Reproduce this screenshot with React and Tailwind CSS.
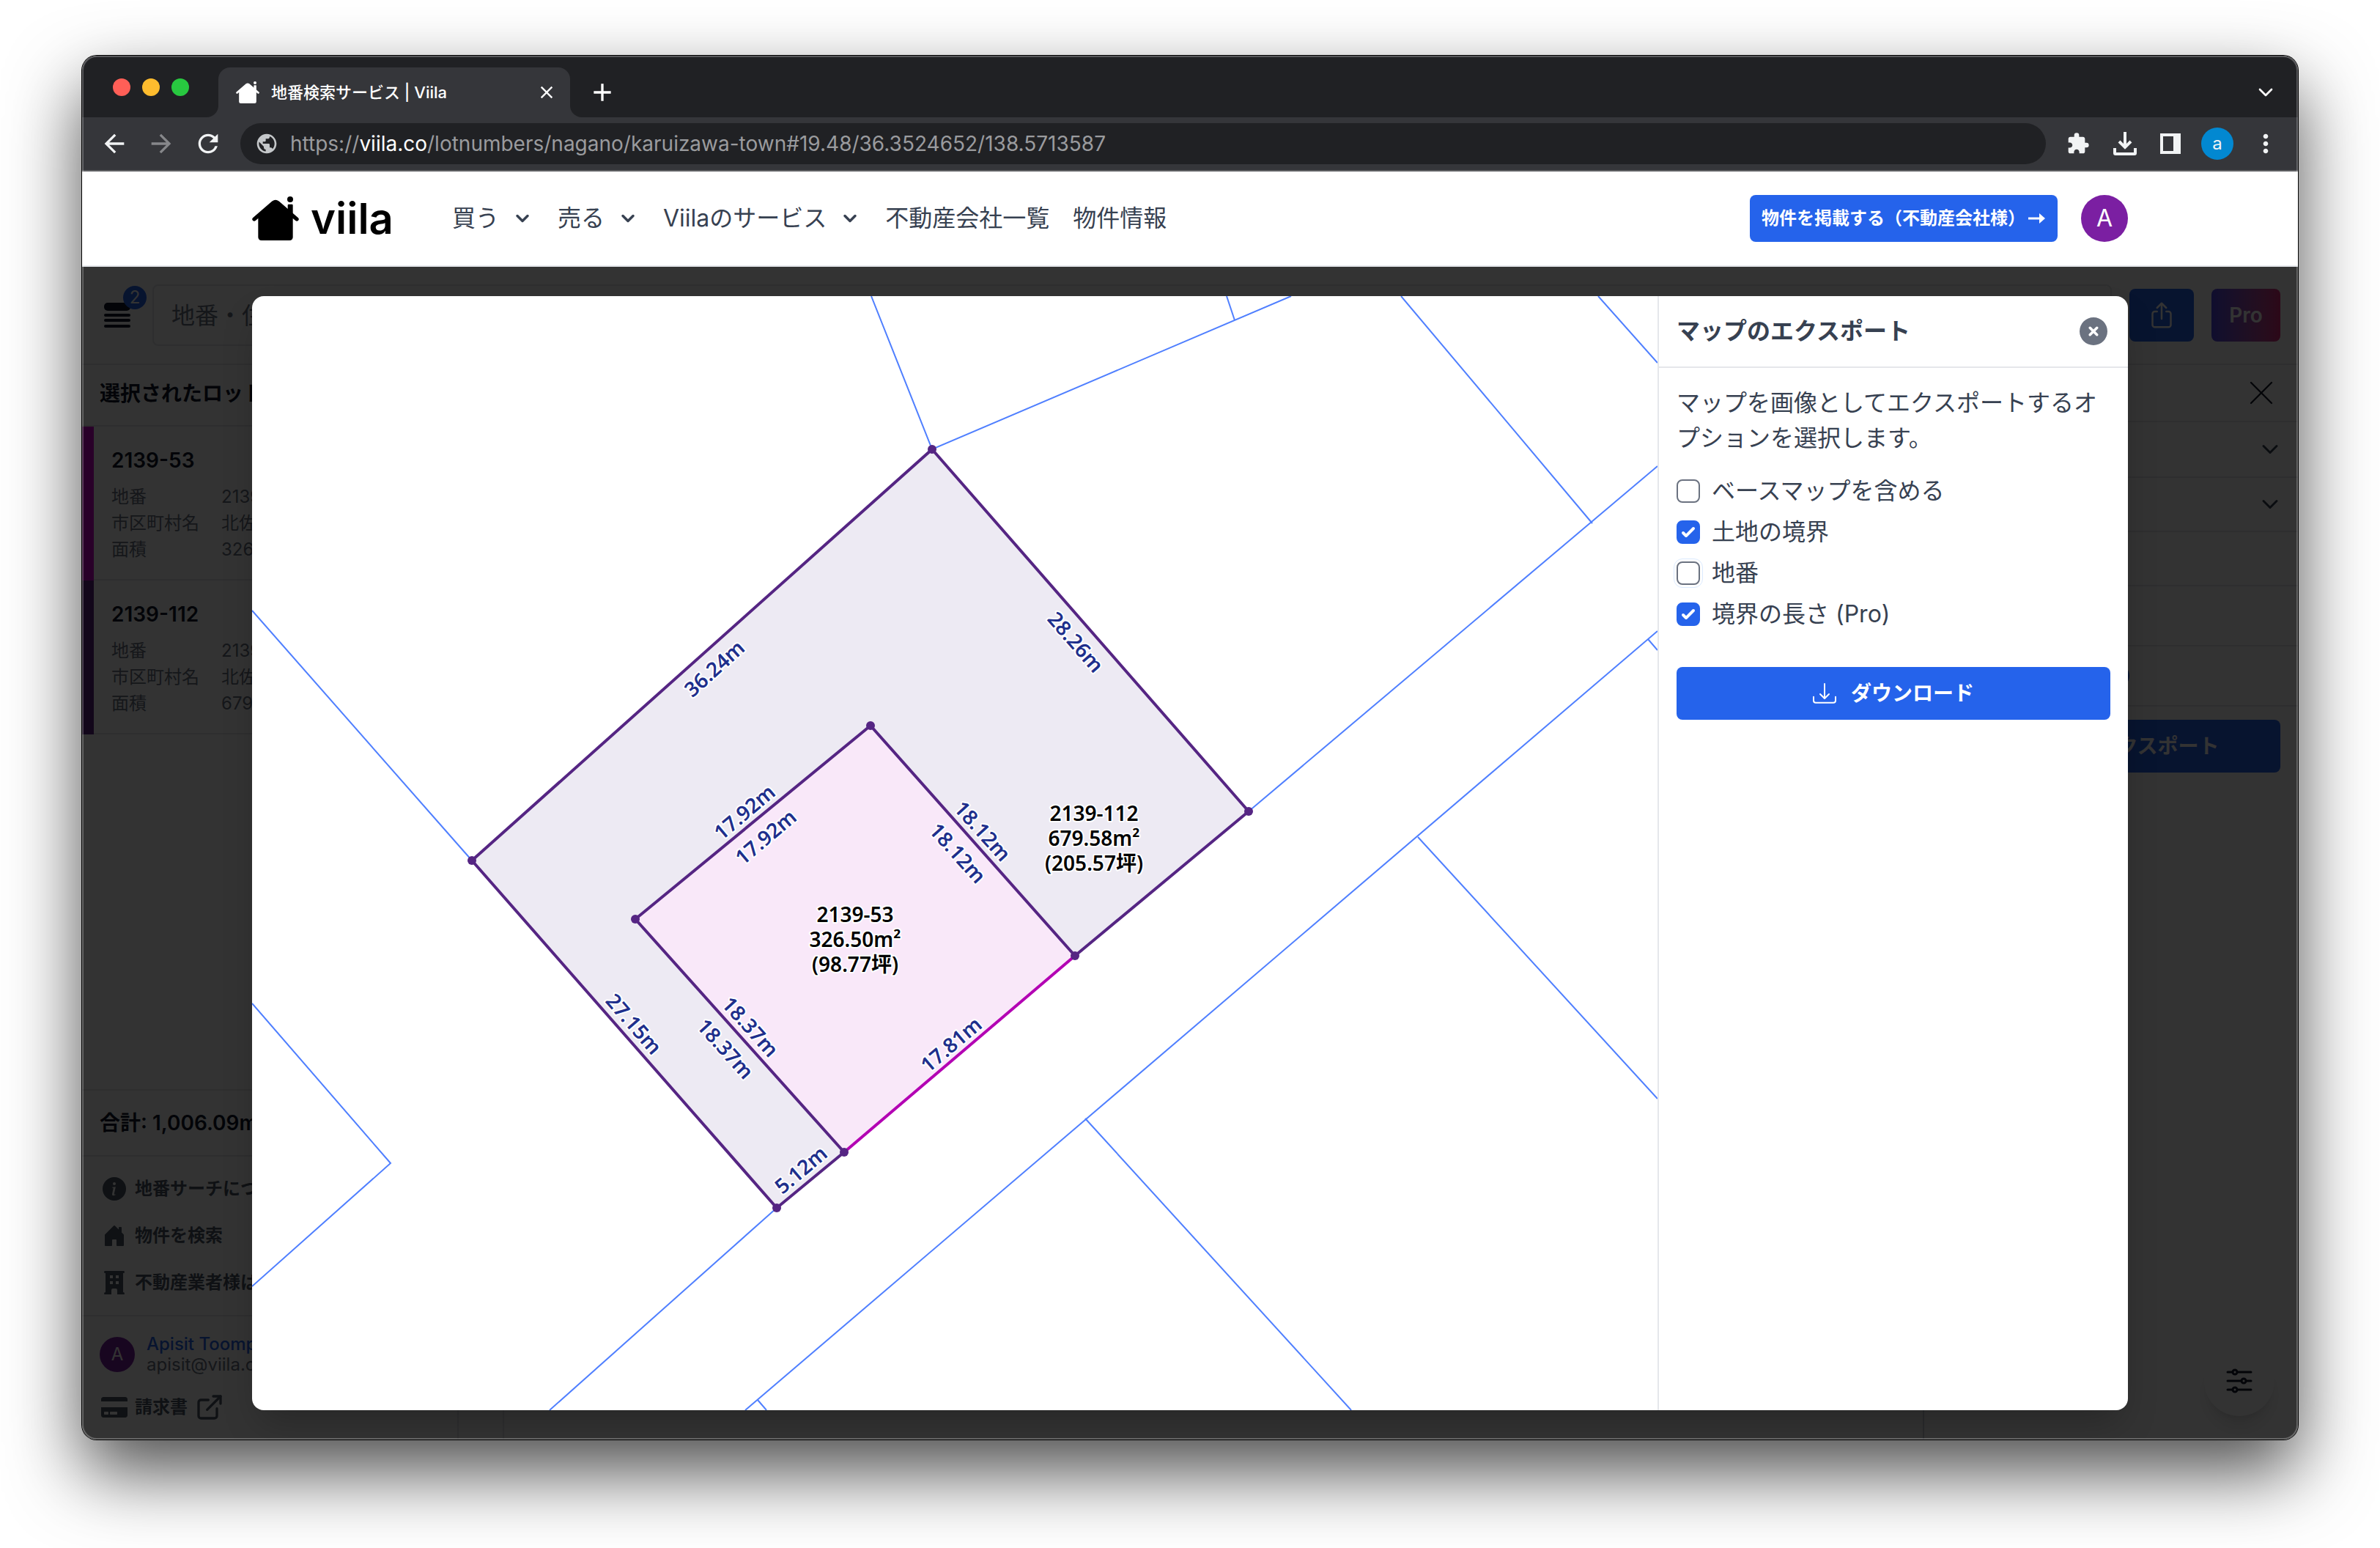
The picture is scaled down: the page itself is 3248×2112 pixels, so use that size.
import React, { useState } from 'react';
import { ChevronDown, ExternalLink, X } from 'lucide-react';
import { BsDownload, BsHouseDoorFill, BsInfoCircleFill } from 'react-icons/bs';
import { FaCreditCard } from 'react-icons/fa';
import { FaCircleXmark } from 'react-icons/fa6';
import { IoShareOutline } from 'react-icons/io5';
import {
  MdAdd,
  MdArrowBack,
  MdArrowForward,
  MdClose,
  MdExtension,
  MdMoreVert,
  MdPublic,
  MdRefresh,
} from 'react-icons/md';

const lots = [
  { id: '2139-53', name: '北佐久郡軽井沢町', area: '326.50m²', bar: 'bg-[#cc00cc]' },
  { id: '2139-112', name: '北佐久郡軽井沢町', area: '679.58m²', bar: 'bg-[#5b2182]' },
];

const navItems = [
  { label: '買う', menu: true },
  { label: '売る', menu: true },
  { label: 'Viilaのサービス', menu: true },
  { label: '不動産会社一覧' },
  { label: '物件情報' },
];

// Boundary lines around the selected lots
const boundaries = [
  'M1189 404 L1272 613 L1762 404',
  'M1674 404 L1685 437',
  'M1912 404 L2173 714',
  'M2181 404 L2262 495',
  'M1704 1107 L2262 636',
  'M2262 861 L1017 1924',
  'M2249 872 L2262 887',
  'M1034 1910 L1046 1924',
  'M1935 1142 L2262 1499',
  'M1481 1526 L1844 1924',
  'M1060 1648 L750 1924',
  'M644 1174 L344 833',
  'M344 1369 L533 1587 L344 1755',
];

const corners = [
  [1272, 613],
  [1704, 1107],
  [1467, 1304],
  [644, 1174],
  [1188, 990],
  [867, 1254],
  [1152, 1572],
  [1060, 1648],
];

const lengths = [
  { text: '36.24m', x: 975, y: 912, angle: -42 },
  { text: '28.26m', x: 1468, y: 876, angle: 49 },
  { text: '17.92m', x: 1016, y: 1108, angle: -40 },
  { text: '17.92m', x: 1045, y: 1142, angle: -40 },
  { text: '18.12m', x: 1341, y: 1134, angle: 48 },
  { text: '18.12m', x: 1307, y: 1164, angle: 48 },
  { text: '18.37m', x: 1024, y: 1401, angle: 48 },
  { text: '18.37m', x: 990, y: 1431, angle: 48 },
  { text: '27.15m', x: 865, y: 1397, angle: 49 },
  { text: '17.81m', x: 1298, y: 1425, angle: -40 },
  { text: '5.12m', x: 1093, y: 1596, angle: -40 },
];

const areas = [
  { lines: ['2139-112', '679.58m²', '(205.57坪)'], x: 1493, y: 1110 },
  { lines: ['2139-53', '326.50m²', '(98.77坪)'], x: 1167, y: 1248 },
];

const HouseLogo = ({ className }) => (
  <svg viewBox="42 54 190 180" className={className} fill="currentColor" aria-hidden="true">
    <circle cx="197" cy="66" r="12" />
    <rect x="187" y="86" width="21" height="60" rx="4" />
    <path d="M50 147 L128 80 Q137 73 146 80 L224 147" fill="none" stroke="currentColor" strokeWidth="16" strokeLinecap="round" />
    <path d="M66 133 L130 80 Q137 75 144 80 L208 133 V220 Q208 234 194 234 H80 Q66 234 66 220 Z" />
  </svg>
);

const TrayIcon = () => (
  <svg viewBox="0 0 32 32" className="size-8" fill="none" stroke="currentColor" strokeWidth="4" aria-hidden="true">
    <path d="M16 0 V21 M8 13 L16 21 L24 13 M2 22 V29 Q2 30 3 30 H29 Q30 30 30 29 V22" />
  </svg>
);

const SidePanelIcon = () => (
  <svg viewBox="0 0 28 28" className="size-7" fill="currentColor" aria-hidden="true">
    <path fillRule="evenodd" d="M0 0 H28 V28 H0 Z M4 4 V24 H18 V4 Z" />
  </svg>
);

const ListIcon = () => (
  <svg viewBox="0 0 36 34" className="h-[34px] w-9" fill="currentColor" aria-hidden="true">
    <rect width="36" height="11" rx="5" />
    <rect y="15" width="36" height="4" rx="2" />
    <rect y="22" width="36" height="4" rx="2" />
    <rect y="30" width="36" height="4" rx="2" />
  </svg>
);

const BuildingIcon = () => (
  <svg viewBox="0 0 32 32" className="size-8" fill="currentColor" aria-hidden="true">
    <path
      fillRule="evenodd"
      d="M3 0 H29 Q30 0 30 2 Q30 3 28 3 V29 Q30 29 30 31 Q30 32 29 32 H20 V26 Q20 24 18 24 H14 Q12 24 12 26 V32 H3 Q2 32 2 31 Q2 29 4 29 V3 Q2 3 2 2 Q2 0 3 0 Z M10 6 V10 H14 V6 Z M18 6 V10 H22 V6 Z M10 14 V18 H14 V14 Z M18 14 V18 H22 V14 Z"
    />
  </svg>
);

const SlidersIcon = () => (
  <svg viewBox="0 0 36 34" className="h-[34px] w-9" fill="none" stroke="currentColor" strokeWidth="3" strokeLinecap="round" aria-hidden="true">
    <path d="M2 5 H8 M16 5 H34 M2 17 H20 M28 17 H34 M2 29 H8 M16 29 H34" />
    <circle cx="12" cy="5" r="3" />
    <circle cx="24" cy="17" r="3" />
    <circle cx="12" cy="29" r="3" />
  </svg>
);

const Browser = () => (
  <>
    {/* Tab strip */}
    <div className="flex h-[84px] items-end bg-[#202124] pr-7 pl-[42px] text-white">
      <div className="flex h-full items-center gap-4 pt-0.5">
        <button aria-label="Close window" className="size-6 rounded-full bg-[#ff5f57]" />
        <button aria-label="Minimize window" className="size-6 rounded-full bg-[#febc2e]" />
        <button aria-label="Zoom window" className="size-6 rounded-full bg-[#28c840]" />
      </div>
      <div className="ml-6 size-4 overflow-hidden bg-[#35363a]">
        <div className="size-4 rounded-br-2xl bg-[#202124]" />
      </div>
      <div className="flex h-[68px] w-[480px] items-center rounded-t-2xl bg-[#35363a] pr-[18px] pl-6">
        <HouseLogo className="h-[30px] w-8" />
        <span className="ml-4 flex-1 text-[22px] leading-8 font-medium whitespace-nowrap">地番検索サービス | Viila</span>
        <button aria-label="Close tab"><MdClose className="size-7" /></button>
      </div>
      <div className="size-4 bg-[#35363a]">
        <div className="size-4 rounded-bl-2xl bg-[#202124]" />
      </div>
      <div className="flex h-[68px] flex-1 items-center justify-between pl-2">
        <button aria-label="New tab"><MdAdd className="size-10" /></button>
        <button aria-label="Search tabs"><ChevronDown className="size-8" strokeWidth={2} /></button>
      </div>
    </div>

    {/* Toolbar */}
    <div className="flex h-[74px] items-center border-b-2 border-[#5f6063] bg-[#35363a] pr-6 pl-6 text-[#f1f3f4]">
      <button aria-label="Back"><MdArrowBack className="size-10" /></button>
      <button aria-label="Forward" className="ml-6 text-[#86878a]"><MdArrowForward className="size-10" /></button>
      <button aria-label="Reload" className="ml-6"><MdRefresh className="size-10" /></button>
      <div role="textbox" aria-label="Address" className="ml-6 flex h-14 flex-1 items-center gap-4 rounded-full bg-[#202124] pl-5 text-[28px] leading-8 text-[#9a9b9e]">
        <MdPublic className="size-8 text-[#c4c7c9]" />
        <span>
          https://<span className="text-white">viila.co</span>/lotnumbers/nagano/karuizawa-town#19.48/36.3524652/138.5713587
        </span>
      </div>
      <div className="ml-7 flex items-center gap-8">
        <button aria-label="Extensions"><MdExtension className="size-8" /></button>
        <button aria-label="Downloads"><TrayIcon /></button>
        <button aria-label="Side panel"><SidePanelIcon /></button>
        <button aria-label="Profile" className="-ml-1 size-11 rounded-full bg-[#0288d1] text-2xl leading-8">a</button>
        <button aria-label="More" className="-ml-2"><MdMoreVert className="size-10" /></button>
      </div>
    </div>
  </>
);

const SiteHeader = () => (
  <header className="border-b-2 border-gray-200 bg-white">
    <div className="mx-auto flex h-32 max-w-[2560px] items-center">
      <a href="#" className="flex items-center gap-4 text-black">
        <HouseLogo className="h-[60px] w-16" />
        <span className="text-[58px] leading-[60px] font-semibold">viila</span>
      </a>
      <nav className="ml-16 flex flex-1 items-center text-[32px] leading-[48px] text-[#374151]">
        {navItems.map((item) => (
          <a key={item.label} href="#" className="flex items-center gap-4 px-4 whitespace-nowrap">
            {item.label}
            {item.menu && <ChevronDown className="mx-0.5 size-7" strokeWidth={3} />}
          </a>
        ))}
      </nav>
      <button className="flex h-16 items-center rounded-lg bg-[#2563eb] px-4 text-2xl font-bold whitespace-nowrap text-white">
        物件を掲載する（不動産会社様）
        <svg viewBox="0 0 24 24" className="ml-1 h-6 w-6" fill="none" stroke="currentColor" strokeWidth="3" aria-hidden="true">
          <path d="M0 12 H16" />
          <path d="M15 5 L23 12 L15 19 Z" fill="currentColor" stroke="none" />
        </svg>
      </button>
      <button aria-label="Account" className="ml-8 size-16 rounded-full bg-[#7b1fa2] text-[32px] text-white">A</button>
    </div>
  </header>
);

const SearchBar = () => (
  <div className="flex h-[134px] items-center gap-6 border-b-2 border-gray-200 px-6">
    <button aria-label="選択リスト" className="relative flex size-12 items-center justify-center text-gray-900">
      <ListIcon />
      <span className="absolute -top-4 -right-4 flex size-8 items-center justify-center rounded-full bg-[#2563eb] text-2xl text-white">2</span>
    </button>
    <input
      type="text"
      aria-label="地番・住所"
      placeholder="地番・住所で検索"
      className="h-[84px] min-w-0 flex-1 rounded-lg border-2 border-gray-200 bg-transparent px-6 text-[32px] placeholder:text-gray-500"
    />
    <button aria-label="共有" className="flex h-[72px] w-[88px] items-center justify-center rounded-lg bg-[#2563eb] text-white">
      <IoShareOutline className="size-10" />
    </button>
    <button className="h-[72px] w-[94px] rounded-lg bg-linear-to-r from-[#4f46e5] to-[#db2777] text-[28px] font-semibold text-white">Pro</button>
  </div>
);

const Sidebar = () => (
  <aside className="flex w-[514px] flex-col border-r-2 border-gray-200">
    <h2 className="flex h-[84px] items-center border-b-2 border-gray-200 px-6 pb-1 text-[28px] font-bold text-gray-900">選択されたロット</h2>
    {lots.map((lot) => (
      <div key={lot.id} className="flex">
        <div className={`w-4 ${lot.bar}`} />
        <div className="flex flex-1 flex-col gap-3 border-b-2 border-gray-200 px-6 pt-[26px] pb-[22px]">
          <h3 className="text-[28px] leading-10 font-semibold text-gray-900">{lot.id}</h3>
          <dl className="grid grid-cols-[150px_1fr] text-2xl leading-9 whitespace-nowrap text-gray-500">
            <dt>地番</dt>
            <dd>{lot.id}</dd>
            <dt>市区町村名</dt>
            <dd>{lot.name}</dd>
            <dt>面積</dt>
            <dd>{lot.area}</dd>
          </dl>
        </div>
      </div>
    ))}
    <p className="mt-auto flex h-[92px] items-center border-y-2 border-gray-200 px-6 text-[28px] font-semibold text-gray-900">合計: 1,006.09m²</p>
    <nav className="border-b-2 border-gray-200 px-7 py-3 text-2xl font-semibold text-gray-600">
      <a href="#" className="flex h-16 items-center gap-3"><BsInfoCircleFill className="size-8" />地番サーチについて</a>
      <a href="#" className="flex h-16 items-center gap-3"><BsHouseDoorFill className="size-8" />物件を検索</a>
      <a href="#" className="flex h-16 items-center gap-3"><BuildingIcon />不動産業者様はこちら</a>
    </nav>
    <div className="flex items-center gap-4 px-6 pt-6 text-2xl leading-7">
      <span className="flex size-12 items-center justify-center rounded-full bg-[#7b1fa2] text-white">A</span>
      <div>
        <p className="font-medium text-[#2563eb]">Apisit Toompakdee</p>
        <p className="text-gray-500">apisit@viila.co</p>
      </div>
    </div>
    <a href="#" className="mt-3 mb-3 flex h-16 items-center gap-[10px] px-[26px] text-2xl font-semibold text-gray-600">
      <FaCreditCard className="size-9" />
      請求書
      <ExternalLink className="size-10" strokeWidth={2} />
    </a>
  </aside>
);

const DetailPanel = () => (
  <aside className="flex w-[512px] flex-col border-l-2 border-gray-300">
    <div className="flex h-[78px] items-center justify-end border-b-2 border-gray-200 pr-[22px]">
      <button aria-label="閉じる" className="text-gray-900"><X className="size-14" strokeWidth={1} /></button>
    </div>
    <button aria-label="詳細を開く" className="flex h-[76px] items-center justify-end border-b-2 border-gray-200 pr-5 text-gray-700">
      <ChevronDown className="size-9" />
    </button>
    <button aria-label="設定を開く" className="flex h-[74px] items-center justify-end border-b-2 border-gray-200 pr-5 text-gray-700">
      <ChevronDown className="size-9" />
    </button>
    <div className="h-[74px] border-b-2 border-gray-200" />
    <div className="h-[82px] border-b-2 border-gray-200" />
    <div className="flex h-[82px] items-center border-b-2 border-gray-200 pl-[216px]">
      <span className="h-8 w-16 rounded-full bg-[#2563eb]" />
    </div>
    <button className="mx-6 mt-[18px] flex h-[72px] items-center justify-center rounded-lg bg-[#2563eb] pl-4 text-[28px] font-semibold text-white">
      マップのエクスポート
    </button>
  </aside>
);

const LotMap = () => (
  <svg viewBox="344 404 1918 1520" preserveAspectRatio="xMidYMid slice" className="h-full w-full" role="img" aria-label="土地の境界">
    <g fill="none" stroke="#4f7fff" strokeWidth="2">
      {boundaries.map((d) => <path key={d} d={d} />)}
    </g>
    <path d="M1272 613 L1704 1107 L1467 1304 L1188 990 L867 1254 L1152 1572 L1060 1648 L644 1174 Z" fill="#edeaf3" />
    <path d="M1188 990 L1467 1304 L1152 1572 L867 1254 Z" fill="#f9e8f9" />
    <path d="M1467 1304 L1152 1572" stroke="#b300b3" strokeWidth="4" />
    <path
      d="M1152 1572 L1060 1648 L644 1174 L1272 613 L1704 1107 L1467 1304 L1188 990 L867 1254 Z"
      fill="none"
      stroke="#552583"
      strokeWidth="4"
      strokeLinejoin="round"
    />
    {corners.map(([x, y]) => <circle key={`${x}-${y}`} cx={x} cy={y} r="6" fill="#552583" />)}
    <g
      className="font-['Noto_Sans','Noto_Sans_CJK_JP',sans-serif] text-[28px] font-semibold"
      textAnchor="middle"
      stroke="#fff"
      strokeWidth="4"
      strokeLinejoin="round"
      paintOrder="stroke"
    >
      {lengths.map((l) => (
        <text key={`${l.x}-${l.y}`} transform={`translate(${l.x} ${l.y}) rotate(${l.angle})`} y="10" fill="#1e2f8c">
          {l.text}
        </text>
      ))}
      {areas.map((a) => (
        <text key={a.x} fill="#000">
          {a.lines.map((line, i) => (
            <tspan key={line} x={a.x} y={a.y + 10 + i * 34}>{line}</tspan>
          ))}
        </text>
      ))}
    </g>
  </svg>
);

const Option = ({ id, label, focused, checked, onChange }) => (
  <div className="flex h-12 items-center gap-4">
    <div className="relative size-8">
      <input
        id={id}
        type="checkbox"
        checked={checked}
        onChange={onChange}
        className={`peer block size-8 appearance-none rounded-lg border-2 border-[#6b7280] bg-white checked:border-[#2563eb] checked:bg-[#2563eb] ${focused ? 'outline-1 outline-offset-3 outline-blue-100' : ''}`}
      />
      <svg viewBox="0 0 16 16" className="pointer-events-none absolute inset-0 hidden size-8 fill-white peer-checked:block" aria-hidden="true">
        <path d="M12.207 4.793a1 1 0 010 1.414l-5 5a1 1 0 01-1.414 0l-2-2a1 1 0 011.414-1.414L6.5 9.086l4.293-4.293a1 1 0 011.414 0z" />
      </svg>
    </div>
    <label htmlFor={id}>{label}</label>
  </div>
);

const ExportModal = () => {
  const [options, setOptions] = useState({ base: false, borders: true, numbers: false, lengths: true });
  const toggle = (key) => () => setOptions({ ...options, [key]: !options[key] });

  return (
    <div className="absolute inset-0 bg-black/80 py-10">
      <div role="dialog" aria-label="マップのエクスポート" className="mx-auto flex h-full max-w-[2560px] overflow-hidden rounded-2xl bg-white shadow-2xl">
        <div className="min-h-0 min-w-0 flex-1">
          <LotMap />
        </div>
        <div className="w-[642px] border-l-2 border-gray-200 text-[32px] leading-[48px] text-[#374151]">
          <div className="flex h-[98px] items-center justify-between border-b-2 border-gray-200 px-6">
            <h2 className="font-semibold">マップのエクスポート</h2>
            <button aria-label="閉じる" className="pr-1 text-[#6b7280]"><FaCircleXmark className="size-[38px]" /></button>
          </div>
          <div className="p-6">
            <p>マップを画像としてエクスポートするオプションを選択します。</p>
            <div className="mt-6 flex flex-col gap-2">
              <Option id="base" label="ベースマップを含める" checked={options.base} onChange={toggle('base')} />
              <Option id="borders" label="土地の境界" checked={options.borders} onChange={toggle('borders')} />
              <Option id="numbers" label="地番" focused checked={options.numbers} onChange={toggle('numbers')} />
              <Option id="lengths" label="境界の長さ (Pro)" checked={options.lengths} onChange={toggle('lengths')} />
            </div>
            <button className="mt-12 flex h-[72px] w-full items-center justify-center gap-5 rounded-lg bg-[#2563eb] text-[28px] font-semibold text-white">
              <BsDownload className="size-8" />
              ダウンロード
            </button>
          </div>
        </div>
      </div>
    </div>
  );
};

export default function App() {
  return (
    <div className="flex min-h-screen flex-col bg-white px-28 pt-[76px] pb-[148px] font-['Inter','Noto_Sans_CJK_JP',sans-serif]">
      <div className="relative flex flex-1 flex-col overflow-hidden rounded-[20px] bg-white shadow-[0_0_0_1px_#000,0_44px_100px_rgba(0,0,0,0.7)]">
        <Browser />
        <SiteHeader />
        <main className="relative flex flex-1 flex-col">
          <SearchBar />
          <div className="flex flex-1">
            <Sidebar />
            <div className="flex-1">
              <div className="h-full w-[62px] border-r-2 border-gray-200" />
            </div>
            <DetailPanel />
          </div>
          <button aria-label="レイヤー" className="absolute right-8 bottom-8 flex size-24 items-center justify-center rounded-full bg-white text-gray-900 shadow-xl">
            <SlidersIcon />
          </button>
          <ExportModal />
        </main>
        {/* Window edge highlight */}
        <div className="pointer-events-none absolute inset-0 rounded-[20px] border-2 border-white/25" />
      </div>
    </div>
  );
}
